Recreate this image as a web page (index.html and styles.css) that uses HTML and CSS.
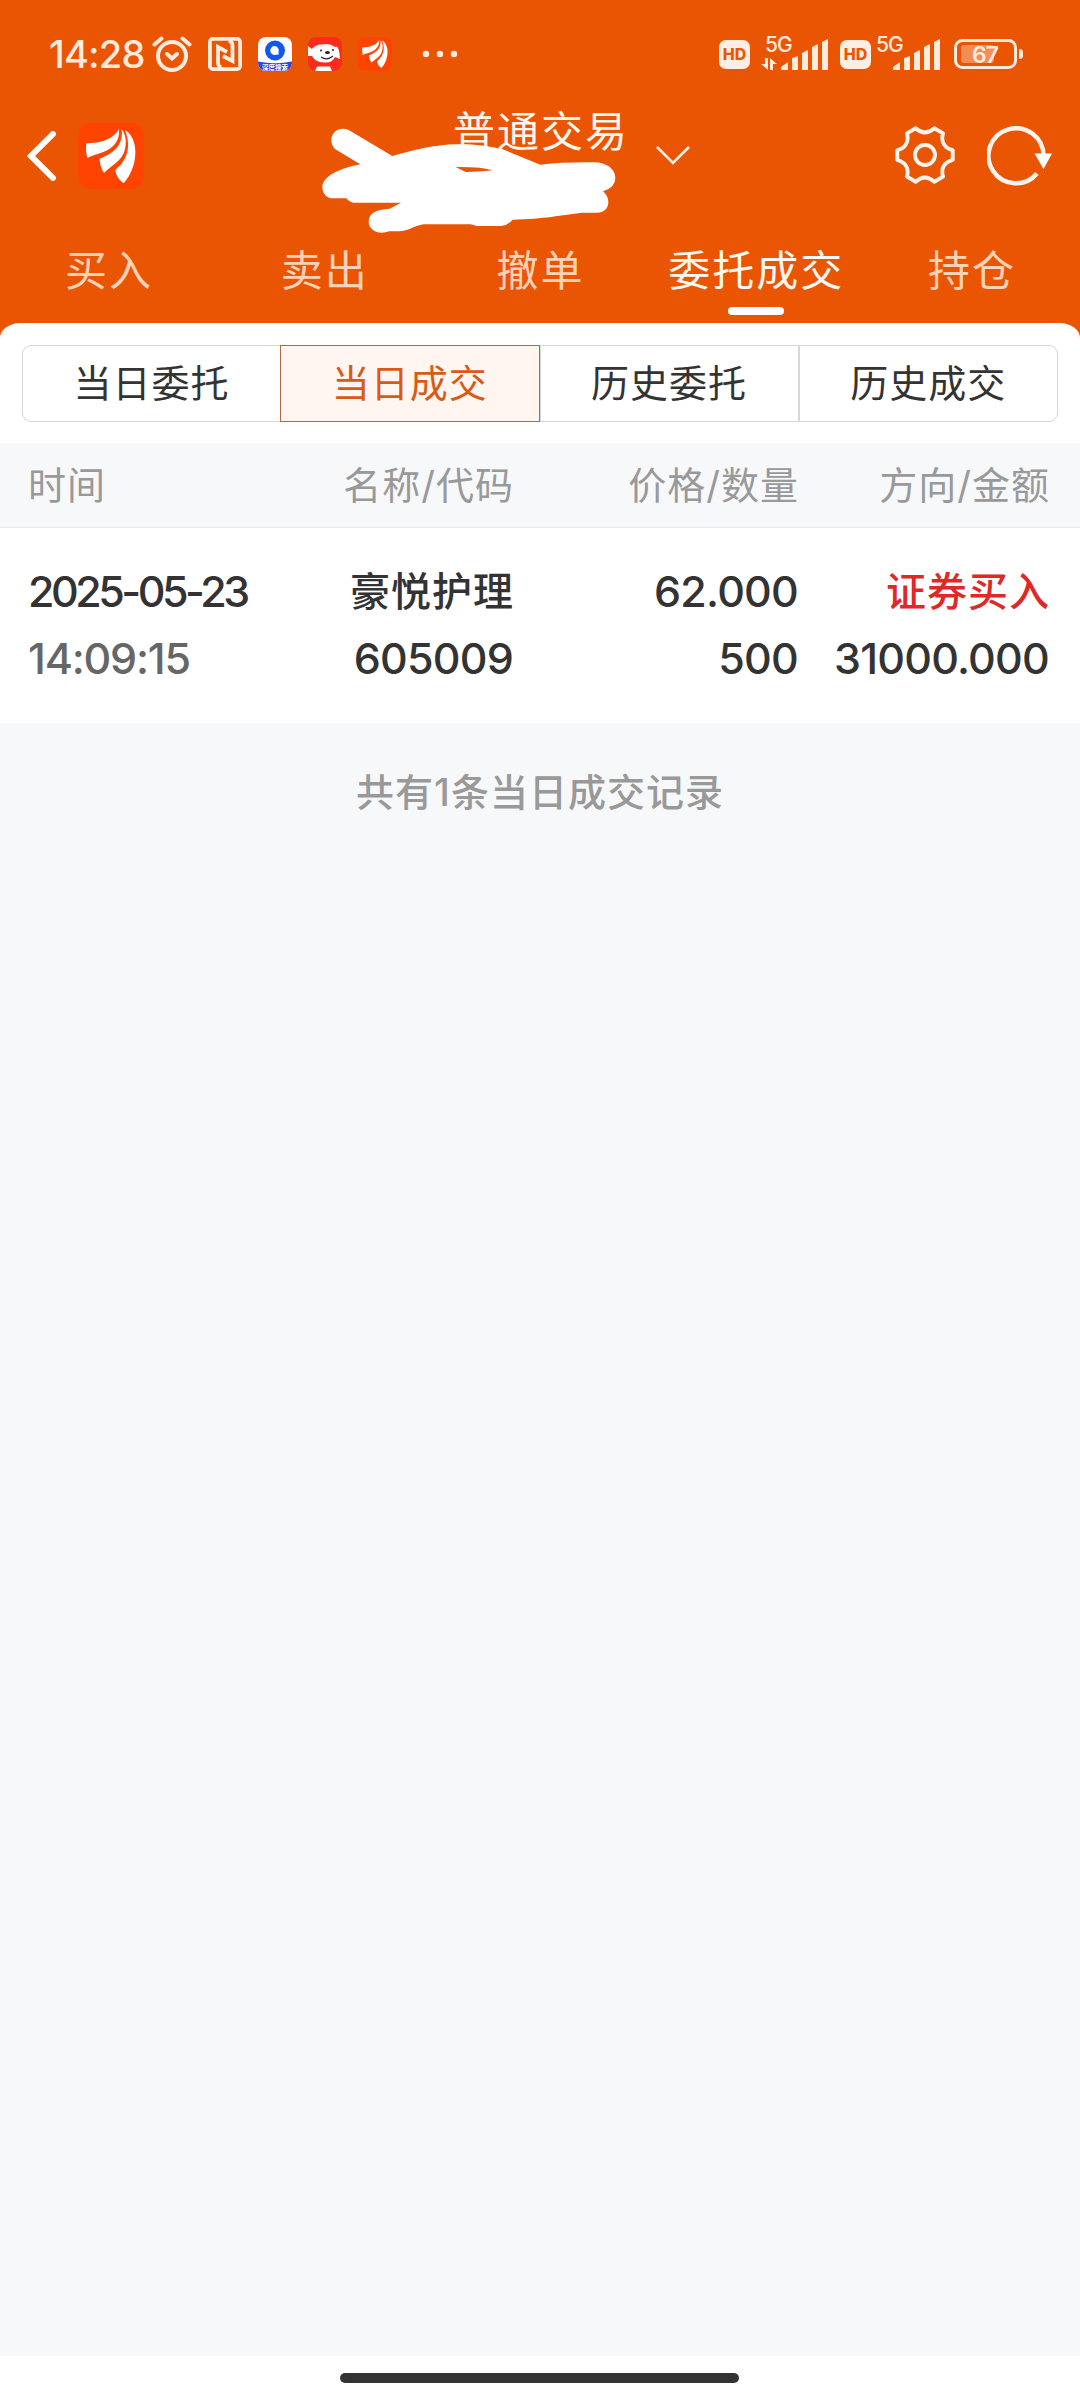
FILE: index.html
```
<!DOCTYPE html>
<html lang="zh-CN">
<head>
  <meta charset="UTF-8">
  <meta name="viewport" content="width=device-width, initial-scale=1.0">
  <title>委托成交</title>
  <link rel="stylesheet" href="styles.css">
</head>
<body>
  <svg class="defs" width="0" height="0">
    <symbol id="logo" viewBox="0 0 198 198">
      <rect width="198" height="198" rx="38" fill="#ff4300"/>
      <g transform="translate(-233 -69)" fill="#fff">
        <path d="M258 130C300 129 340 118 356 87C358 112 350 132 326 148C303 162 281 163 261 174Q254 152 258 130Z"/>
        <path d="M364 87C379 108 380 135 370 160C357 188 331 198 311 219Q298 198 298 176C338 160 370 138 364 87Z"/>
        <path d="M374 90C404 108 410 150 402 186C395 215 384 233 370 250Q347 234 345 210C376 184 396 146 374 90Z"/>
      </g>
    </symbol>
    <symbol id="signal" viewBox="0 0 48 32">
      <g fill="#ffeade">
        <path d="M0 31V28L7 23V31Z"/>
        <path d="M11 31V19L17 17V31Z"/>
        <path d="M21 31V14L27 11V31Z"/>
        <path d="M31 31V8L37 5V31Z"/>
        <path d="M41 31V3L47 0V31Z"/>
      </g>
    </symbol>
  </svg>

  <header class="header">
    <div class="status-bar">
      <div class="status-left">
        <span class="clock">14:28</span>
        <svg class="alarm" width="40" height="36" viewBox="0 0 40 36" fill="none" stroke="#ffeade" stroke-width="4" stroke-linecap="round">
          <circle cx="20" cy="20" r="14"/>
          <path d="M2.500 8.500L9.500 2.500M37.500 8.500L30.500 2.500M15 18L20 22.500L25 18"/>
        </svg>
        <svg width="34" height="34" viewBox="0 0 34 34" fill="none" stroke="#ffeade" stroke-width="3.800">
          <rect x="1.900" y="1.900" width="30.200" height="30.200" rx="3"/>
          <path d="M13.500 30Q10 30 10 25V10L19 15M20.500 4Q24.500 4 24.500 9V24L15 19"/>
        </svg>
        <svg width="34" height="34" viewBox="0 0 34 34">
          <clipPath id="round"><rect width="34" height="34" rx="8"/></clipPath>
          <g clip-path="url(#round)">
            <rect width="34" height="34" fill="#fff"/>
            <circle cx="17" cy="13.500" r="10" fill="#1557ee"/>
            <path d="M17 9a4.500 4.500 0 1 0 1 8.800l2.800-.3-.3-2.500A4.500 4.500 0 0 0 17 9Z" fill="#fff"/>
            <path d="M0 24.500Q17 28 34 24.500V34H0Z" fill="#3444dc"/>
            <text class="quark-text" x="17" y="33" text-anchor="middle">深度搜索</text>
          </g>
        </svg>
        <svg width="34" height="34" viewBox="0 0 34 34">
          <g clip-path="url(#round)">
            <rect width="34" height="34" fill="#fb2c1c"/>
            <path d="M0 9L4 12Q8 7 14 7.500Q22 6 27 10Q31 7 32 22L27 20Q24 26 17 25.500Q8 26 4 19H0Z" fill="#fff"/>
            <path d="M9 29.500H22L24 34H7Z" fill="#fff"/>
            <g fill="#222"><circle cx="13" cy="13.500" r="1"/><circle cx="25" cy="13" r="1"/><ellipse cx="19.500" cy="15.500" rx="2.500" ry="1.500"/></g>
            <path d="M13 20Q19 24 25 19" fill="none" stroke="#222" stroke-width="1.200"/>
          </g>
        </svg>
        <svg width="34" height="34"><use href="#logo"/></svg>
        <svg class="dots" width="36" height="8" viewBox="0 0 36 8" fill="#ffeade">
          <circle cx="4" cy="4" r="3.200"/><circle cx="18" cy="4" r="3.200"/><circle cx="32" cy="4" r="3.200"/>
        </svg>
      </div>
      <div class="status-right">
        <span class="hd">HD</span>
        <div class="net">
          <span class="net-type">5G</span>
          <svg class="updown" width="16" height="12" viewBox="0 0 16 12" fill="#ffeade">
            <path d="M4 0H7V12L0 6H4ZM9 12V0L16 6H12V12Z"/>
          </svg>
          <svg class="bars" width="48" height="32"><use href="#signal"/></svg>
        </div>
        <span class="hd">HD</span>
        <div class="net net-second">
          <span class="net-type">5G</span>
          <svg class="bars" width="48" height="32"><use href="#signal"/></svg>
        </div>
        <svg class="battery" width="70" height="30" viewBox="0 0 70 30">
          <rect x="1.500" y="1.500" width="60" height="27" rx="7" fill="none" stroke="#ffeade" stroke-width="3"/>
          <rect x="7" y="6" width="33" height="18" rx="3" fill="#f28d55"/>
          <path d="M65 10Q69 10 69 13V17Q69 20 65 20Z" fill="#ffeade"/>
          <text class="battery-text" x="31" y="23.500" text-anchor="middle">67</text>
        </svg>
      </div>
    </div>

    <div class="nav">
      <svg class="back" width="30" height="50" viewBox="0 0 30 50" fill="none" stroke="#fff" stroke-width="6" stroke-linecap="round">
        <path d="M26 3L4 25L26 47"/>
      </svg>
      <svg class="app-logo" width="66" height="66"><use href="#logo"/></svg>
      <h1 class="title">普通交易</h1>
      <svg class="chevron" width="34" height="19" viewBox="0 0 34 19" fill="none" stroke="#fff0e6" stroke-width="2.600">
        <path d="M1 1L17 17L33 1"/>
      </svg>
      <svg class="gear" width="60" height="58" viewBox="581 75 186 180" fill="none" stroke="#fff4ec" stroke-width="12" stroke-linejoin="round">
        <path d="M645 82Q673 108 703 82L730 98C722 124 735 144 760 150V180C735 187 722 205 730 232L703 248Q673 222 645 248L618 232C626 205 612 187 588 180V150C612 144 626 124 618 98Z"/>
        <circle cx="674" cy="165" r="31"/>
      </svg>
      <svg class="refresh" width="66" height="60" viewBox="0 0 66 60">
        <path d="M56.500 30A27.500 27.500 0 1 0 50 47.500" fill="none" stroke="#fff4ec" stroke-width="4.500"/>
        <path d="M47.500 27.500H65L56.500 43Z" fill="#fff"/>
      </svg>
      <!-- brush strokes hiding the account number -->
      <svg class="scribble" width="296" height="108" viewBox="65 114 888 324">
        <path fill="#fff" fill-rule="evenodd" d="M145 120L276 198C340 181 400 164 470 163C520 162 560 168 605 177L720 224Q790 216 880 217C920 217 945 238 945 264Q945 293 908 304Q924 318 924 336C924 355 911 368 890 368H845C785 375 730 387 637 389Q620 408 603 408H530L512 403H370C340 407 325 424 295 424H265C235 437 205 419 205 396C205 370 225 358 268 356L302 338H160Q147 337 138 325H98C78 325 66 309 66 290C68 255 128 233 180 223L110 181C97 173 93 160 93 149C94 124 120 108 145 120ZM466 231L496 246Q535 246 578 241Q545 230 466 231Z"/>
      </svg>
    </div>

    <nav class="tabs">
      <a class="tab">买入</a>
      <a class="tab">卖出</a>
      <a class="tab">撤单</a>
      <a class="tab active">委托成交</a>
      <a class="tab">持仓</a>
    </nav>
  </header>

  <main class="panel">
    <div class="segments">
      <div class="segment">当日委托</div>
      <div class="segment active">当日成交</div>
      <div class="segment">历史委托</div>
      <div class="segment">历史成交</div>
    </div>

    <div class="row head">
      <span>时间</span>
      <span>名称/代码</span>
      <span>价格/数量</span>
      <span>方向/金额</span>
    </div>

    <div class="row record">
      <span class="date">2025-05-23</span>
      <span>豪悦护理</span>
      <span class="num">62.000</span>
      <span class="buy">证券买入</span>
      <span class="time">14:09:15</span>
      <span class="num">605009</span>
      <span class="num">500</span>
      <span class="num">31000.000</span>
    </div>
  </main>

  <p class="summary">共有1条当日成交记录</p>

  <footer class="home">
    <div class="home-bar"></div>
  </footer>
</body>
</html>
```
FILE: styles.css
```
* {
  box-sizing: border-box;
}
body {
  display: flex;
  flex-direction: column;
  width: 1080px;
  height: 2400px;
  margin: 0;
  background: #f7f8fa;
  color: #333;
  font-family: Inter, "Noto Sans CJK SC", sans-serif;
  overflow: hidden;
}
svg {
  display: block;
  flex: none;
}
.defs {
  position: absolute;
}

/* header */
.header {
  height: 337px;
  background: #ea5504;
}
.status-bar {
  display: flex;
  justify-content: space-between;
  height: 108px;
  padding: 0 56px 0 49px;
}
.status-left,
.status-right {
  display: flex;
  align-items: center;
  height: 108px;
}
.status-left {
  gap: 16px;
}
.clock {
  width: 96px;
  color: #ffeade;
  font-size: 38px;
  font-weight: 500;
  letter-spacing: -0.8px;
  white-space: nowrap;
}
.alarm {
  margin-left: -9px;
}
.dots {
  margin-left: 14px;
}
.quark-text {
  font-size: 6.5px;
  font-weight: 700;
  fill: #fff;
}
.hd {
  width: 31px;
  height: 29px;
  border-radius: 7px;
  background: #ffeee4;
  color: #ea5504;
  font-size: 16px;
  font-weight: 800;
  line-height: 29px;
  text-align: center;
}
.net {
  position: relative;
  width: 68px;
  height: 34px;
  margin: 0 11px 0 11px;
}
.net-second {
  width: 65px;
  margin: 0 13px 0 5px;
}
.net-type {
  position: absolute;
  left: 4px;
  top: -4px;
  color: #ffeade;
  font-size: 21px;
  font-weight: 500;
  line-height: 24px;
  letter-spacing: -1px;
}
.net-second .net-type {
  left: 0;
}
.updown {
  position: absolute;
  left: 0;
  bottom: 1px;
}
.bars {
  position: absolute;
  right: 0;
  bottom: 0;
}
.battery-text {
  fill: #ffeade;
  font-size: 23px;
  font-weight: 600;
  letter-spacing: -1px;
}

.nav {
  position: relative;
  display: flex;
  align-items: center;
  height: 96px;
  padding: 0 27px;
}
.app-logo {
  margin-left: 21px;
}
.title {
  margin: 0 0 48px 309px;
  color: #fff6ee;
  font-size: 42px;
  font-weight: 400;
  line-height: 50px;
  letter-spacing: 2px;
}
.chevron {
  margin: 0 auto 2px 27px;
}
.gear {
  margin: 0 32px 2px 0;
}
.scribble {
  position: absolute;
  left: 322px;
  top: 20px;
}

.tabs {
  display: flex;
  height: 119px;
  padding-left: 1px;
}
.tab {
  display: flex;
  flex: 1;
  flex-direction: column;
  align-items: center;
  padding-top: 42px;
  color: #ffd2b8;
  font-size: 42px;
  line-height: 50px;
  letter-spacing: 2px;
  white-space: nowrap;
}
.tab.active {
  color: #fff8f2;
}
.tab.active::after {
  content: "";
  width: 56px;
  height: 8px;
  margin-top: 11px;
  border-radius: 4px;
  background: #fff;
}

/* records */
.panel {
  margin-top: -14px;
  padding-top: 22px;
  border-radius: 20px 20px 0 0 / 15px 15px 0 0;
  background: #fff;
}
.segments {
  display: flex;
  height: 77px;
  margin: 0 22px 21px;
}
.segment {
  flex: 1;
  border: 1px solid #d5d8da;
  font-size: 38px;
  line-height: 75px;
  letter-spacing: 1px;
  text-align: center;
}
.segment:first-child {
  border-right: 0;
  border-radius: 9px 0 0 9px;
}
.segment:last-child {
  border-radius: 0 9px 9px 0;
}
.segment.active {
  border-color: #b06a42;
  background: #fff5f1;
  color: #d95a14;
}
.row {
  display: grid;
  grid-template-columns: 246px 240px 285px 251px;
  padding: 0 29px 0 28px;
  text-align: right;
  white-space: nowrap;
}
.row span:nth-child(4n + 1) {
  text-align: left;
}
.head {
  height: 85px;
  border-bottom: 1px solid #e8eaec;
  background: #f7f8fa;
  color: #999;
  font-size: 38px;
  line-height: 84px;
  letter-spacing: 1px;
}
.record {
  height: 195px;
  padding-top: 30px;
  grid-auto-rows: 67px;
  font-size: 40px;
  font-weight: 500;
  line-height: 67px;
  letter-spacing: 1px;
}
.record .num,
.record .date,
.record .time {
  font-size: 43px;
  letter-spacing: -1px;
}
.record .num {
  padding-right: 1px;
  letter-spacing: -0.8px;
}
.record .date {
  letter-spacing: -3.5px;
}
.record .time {
  color: #666;
  letter-spacing: -1.2px;
}
.record .buy {
  color: #e02826;
}

.summary {
  margin: 39px 0 0;
  color: #999;
  font-size: 38px;
  font-weight: 500;
  line-height: 60px;
  letter-spacing: 1px;
  text-align: center;
}
.home {
  height: 44px;
  margin-top: auto;
  padding: 17px 1px 0 0;
  background: #fff;
}
.home-bar {
  width: 399px;
  height: 10px;
  margin: 0 auto;
  border-radius: 5px;
  background: #333;
}
```
